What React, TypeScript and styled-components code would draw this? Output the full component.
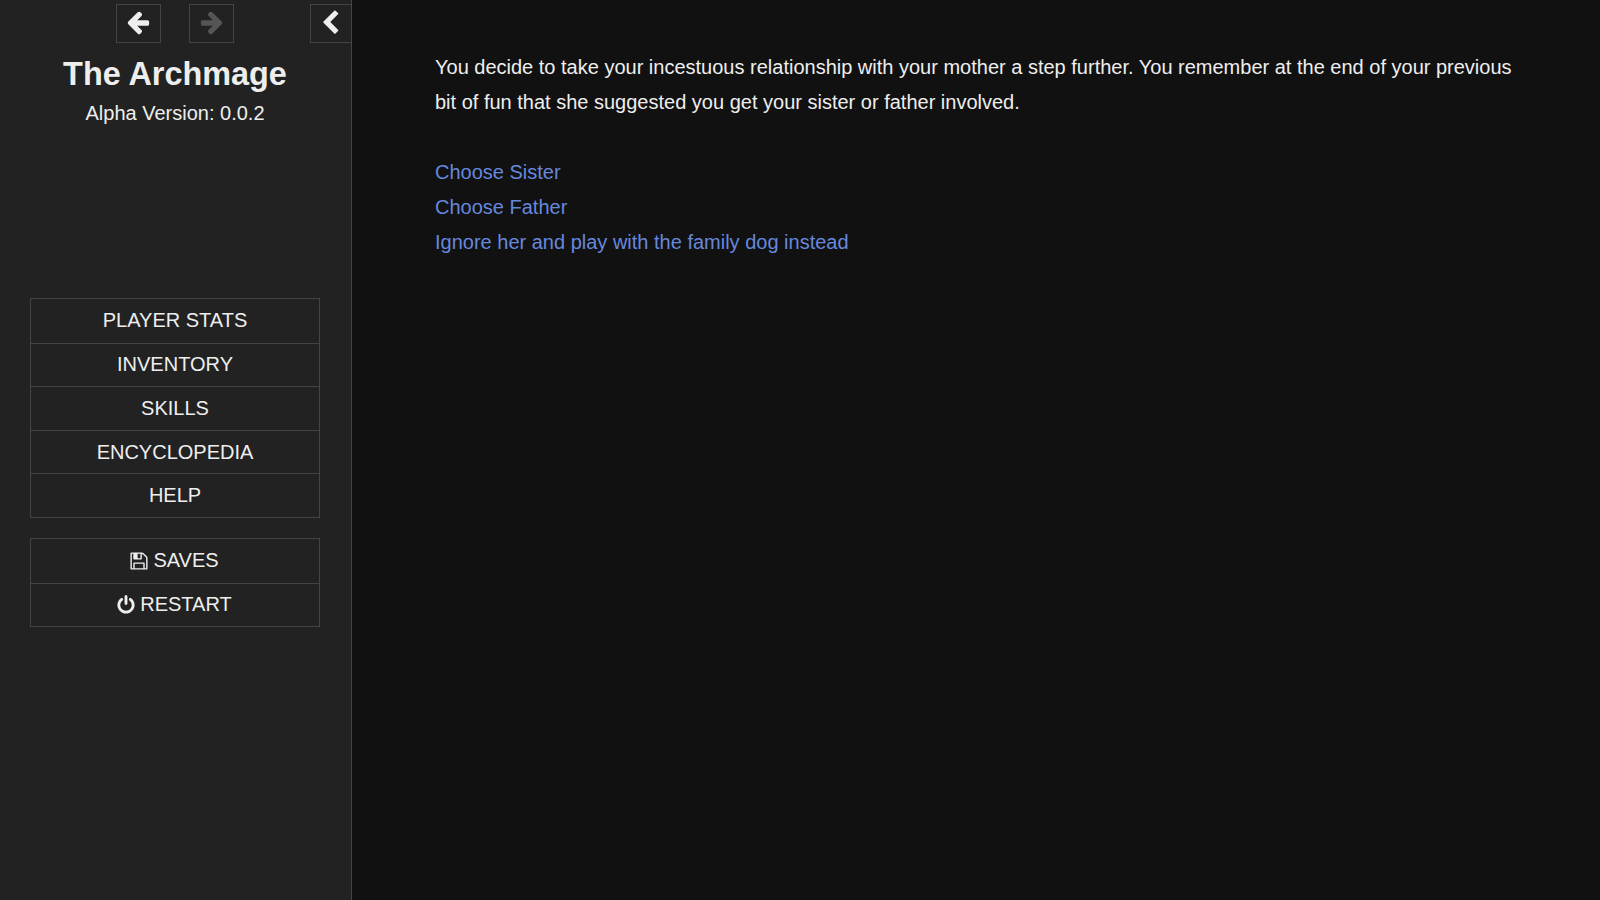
import React from 'react';
import styled, { createGlobalStyle } from 'styled-components';

const GlobalStyle = createGlobalStyle`
  html, body {
    margin: 0;
    height: 100%;
    background: #111;
  }
  body {
    font-family: 'Liberation Sans', Arial, sans-serif;
    color: #eee;
  }
`;

const icons = {
  back: 'M1664 896v128q0 53-32.5 90.5t-84.5 37.5h-704l293 294q38 36 38 90t-38 90l-75 76q-37 37-90 37-52 0-91-37l-651-652q-37-37-37-90 0-52 37-91l651-650q38-38 91-38 52 0 90 38l75 74q38 38 38 91t-38 91l-293 293h704q52 0 84.5 37.5t32.5 90.5z',
  forward: 'M1600 960q0 54-37 91l-651 651q-39 37-91 37-51 0-90-37l-75-75q-38-38-38-91t38-91l293-293h-704q-52 0-84.5-37.5t-32.5-90.5v-128q0-53 32.5-90.5t84.5-37.5h704l-293-294q-38-36-38-90t38-90l75-75q38-38 90-38 53 0 91 38l651 651q37 35 37 90z',
  stow: 'M1171 301l-531 531 531 531q19 19 19 45t-19 45l-166 166q-19 19-45 19t-45-19l-742-742q-19-19-19-45t19-45l742-742q19-19 45-19t45 19l166 166q19 19 19 45t-19 45z',
  save: 'M512 1536h768v-384h-768v384zm896 0h128v-896q0-14-10-38.500t-20-34.500l-281-281q-10-10-34-20t-39-10v416q0 40-28 68t-68 28h-576q-40 0-68-28t-28-68v-416h-128v1280h128v-416q0-40 28-68t68-28h832q40 0 68 28t28 68v416zm-384-928v-320q0-13-9.500-22.500t-22.500-9.500h-192q-13 0-22.500 9.500t-9.500 22.500v320q0 13 9.500 22.500t22.500 9.500h192q13 0 22.500-9.500t9.500-22.500zm640 32v928q0 40-28 68t-68 28h-1344q-40 0-68-28t-28-68v-1344q0-40 28-68t68-28h928q40 0 88 20t76 48l280 280q28 28 48 76t20 88z',
  power: 'M1664 896q0 156-61 298t-164 245-245 164-298 61-298-61-245-164-164-245-61-298q0-182 80.500-343t226.500-270q43-32 95.500-25t83.500 50q32 42 24.500 94.500t-49.500 84.500q-98 74-151.500 181t-53.500 228q0 104 40.500 198.500t109.500 163.500 163.500 109.500 198.500 40.500 198.500-40.500 163.500-109.500 109.500-163.500 40.500-198.500q0-121-53.500-228t-151.500-181q-42-32-49.500-84.500t24.500-94.500q31-43 84-50t95 25q146 109 226.500 270t80.500 343zm-640-768v640q0 52-38 90t-90 38-90-38-38-90v-640q0-52 38-90t90-38 90 38 38 90z',
};

const Icon: React.FC<{ name: keyof typeof icons; size: number }> = ({ name, size }) => (
  <svg width={size} height={size} viewBox="0 0 1792 1792" fill="currentColor">
    <path d={icons[name]} />
  </svg>
);

const Page = styled.div`
  display: flex;
  height: 900px;
  overflow: hidden;
`;

const Sidebar = styled.aside`
  box-sizing: border-box;
  flex: 0 0 352px;
  background: #222;
  border-right: 1px solid #444;
  display: flex;
  flex-direction: column;
`;

const HistoryBar = styled.div`
  display: flex;
  padding: 4px 0 0 116px;
  height: 43px;
  box-sizing: border-box;
`;

const HistoryButton = styled.button<{ $disabled?: boolean }>`
  box-sizing: border-box;
  width: 45px;
  height: 39px;
  margin-right: 28px;
  padding: 0 ${p => (p.$disabled ? 0 : 2)}px 4px 0;
  background: transparent;
  border: 1px solid #444;
  color: ${p => (p.$disabled ? '#555' : '#eee')};
  display: flex;
  align-items: center;
  justify-content: center;
`;

const StowButton = styled(HistoryButton)`
  width: 41px;
  margin: 0 0 0 auto;
  padding: 0 0 2px 6px;
  border-right: none;
`;

const Title = styled.h1`
  margin: 11px 0 0;
  padding-right: 1px;
  font-size: 32.4px;
  line-height: 40px;
  font-weight: bold;
  text-align: center;
  color: #eee;
`;

const Version = styled.div`
  margin-top: 4px;
  padding-right: 1px;
  font-size: 20px;
  line-height: 30px;
  text-align: center;
`;

const Menu = styled.nav`
  box-sizing: border-box;
  width: 290px;
  margin-left: 30px;
  border: 1px solid #444;
`;

const MainMenu = styled(Menu)`
  margin-top: 170px;
`;

const SystemMenu = styled(Menu)`
  margin-top: 20px;
`;

const MenuItem = styled.div`
  box-sizing: border-box;
  height: 43.6px;
  display: flex;
  align-items: center;
  justify-content: center;
  font-size: 20px;
  color: #eee;
  & + & {
    border-top: 1px solid #444;
  }
`;

const IconItem = styled(MenuItem)`
  gap: 4px;
  padding-right: 2px;
`;

const Story = styled.main`
  flex: 1;
  padding: 50px 80px 0 83px;
  font-size: 20px;
  line-height: 35px;
  color: #eee;
`;

const Paragraph = styled.p`
  margin: 0 0 35px;
`;

const Choice = styled.a`
  display: block;
  color: #68d;
  text-decoration: none;
`;

const App: React.FC = () => (
  <>
    <GlobalStyle />
    <Page>
      <Sidebar>
        <HistoryBar>
          <HistoryButton><Icon name="back" size={26} /></HistoryButton>
          <HistoryButton $disabled><Icon name="forward" size={26} /></HistoryButton>
          <StowButton><Icon name="stow" size={26} /></StowButton>
        </HistoryBar>
        <Title>The Archmage</Title>
        <Version>Alpha Version: 0.0.2</Version>
        <MainMenu>
          <MenuItem>PLAYER STATS</MenuItem>
          <MenuItem>INVENTORY</MenuItem>
          <MenuItem>SKILLS</MenuItem>
          <MenuItem>ENCYCLOPEDIA</MenuItem>
          <MenuItem>HELP</MenuItem>
        </MainMenu>
        <SystemMenu>
          <IconItem><Icon name="save" size={20} />SAVES</IconItem>
          <IconItem><Icon name="power" size={20} />RESTART</IconItem>
        </SystemMenu>
      </Sidebar>
      <Story>
        <Paragraph>
          You decide to take your incestuous relationship with your mother a step further. You remember at the end of your previous bit of fun that she suggested you get your sister or father involved.
        </Paragraph>
        <Choice>Choose Sister</Choice>
        <Choice>Choose Father</Choice>
        <Choice>Ignore her and play with the family dog instead</Choice>
      </Story>
    </Page>
  </>
);

export default App;
